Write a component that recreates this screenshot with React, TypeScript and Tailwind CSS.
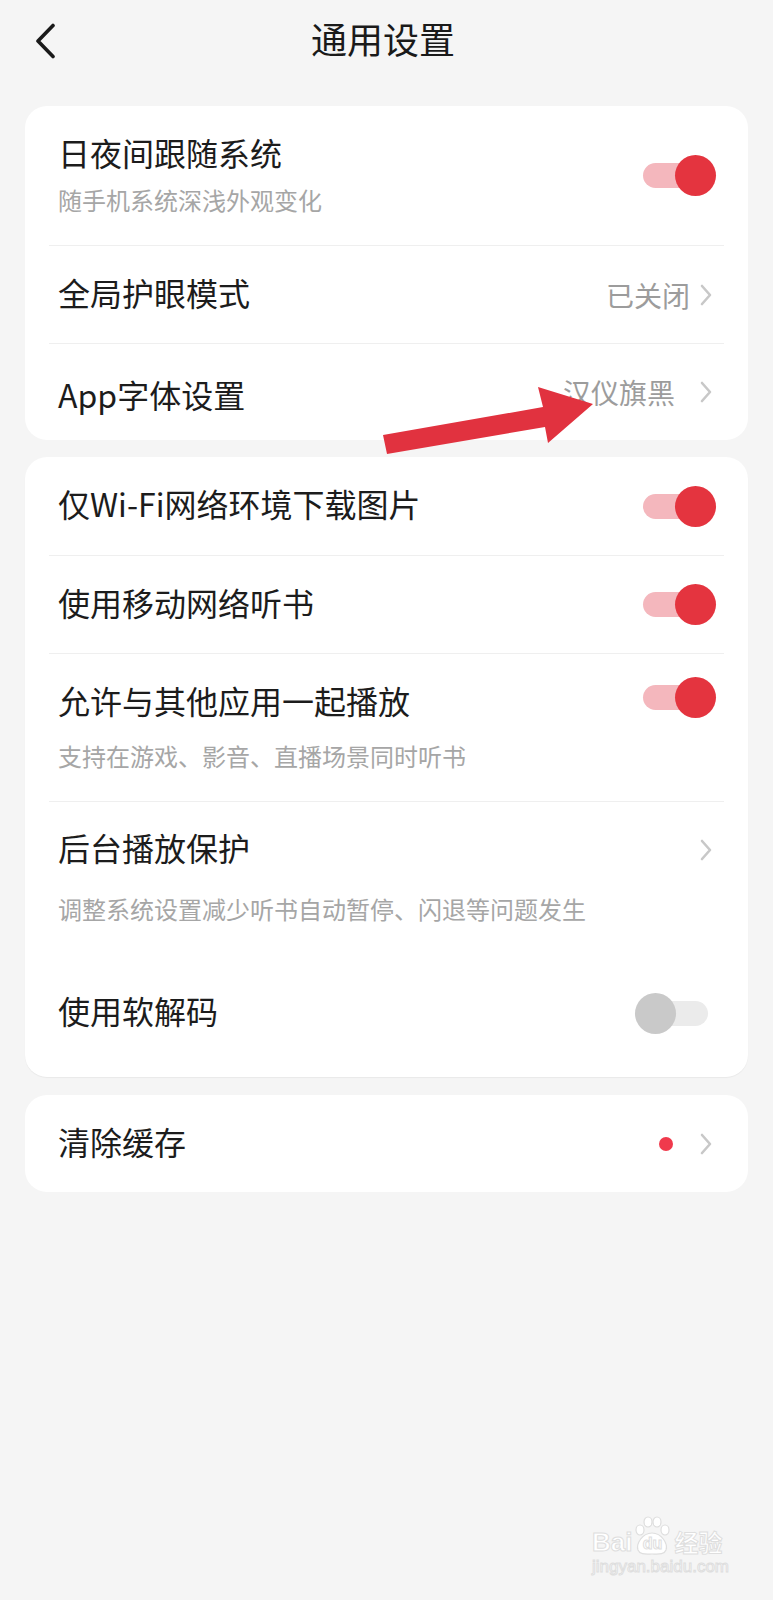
import React from "react";

// small gray chevron used on the right of navigable rows
const Chevron = () => (
  <svg width="12" height="22" viewBox="0 0 12 22" className="mr-[4px] shrink-0">
    <path d="M2 2 L10 11 L2 20" fill="none" stroke="#c8c8c8" strokeWidth="2.6" strokeLinecap="round" strokeLinejoin="round" />
  </svg>
);

const Toggle = ({ on }: { on: boolean }) => (
  <div className="relative h-[41px] w-[81px] shrink-0">
    <div className={`absolute left-[8px] top-[8px] h-[25px] w-[65px] rounded-full ${on ? "bg-[#f4b7bd]" : "bg-[#ebebeb]"}`} />
    <div className={`absolute top-0 h-[41px] w-[41px] rounded-full ${on ? "right-0 bg-[#e4343f]" : "left-0 bg-[#c9c9c9]"}`} />
  </div>
);

const Divider = () => <div className="mx-[24px] h-px bg-[#efefef]" />;

// text sits a bit high in its box, like the app font does
const Title = ({ children }: { children: React.ReactNode }) => (
  <div className="pb-[6px] text-[32px] leading-[34px] text-[#1c1c1c]">{children}</div>
);

const Sub = ({ children, className = "" }: { children: React.ReactNode; className?: string }) => (
  <div className={`text-[24px] leading-[32px] text-[#a6a6a6] ${className}`}>{children}</div>
);

const Card = ({ children, className = "" }: { children: React.ReactNode; className?: string }) => (
  <div className={`mx-[25px] overflow-hidden rounded-[22px] bg-white ${className}`}>{children}</div>
);

export default function App() {
  return (
    <div className="relative min-h-[1600px] w-full bg-[#f5f5f5] pb-10 font-['Noto_Sans_CJK_SC','Noto_Sans',sans-serif]">
      {/* header */}
      <div className="relative flex h-[84px] items-center justify-center pr-[7px]">
        <svg width="24" height="36" viewBox="0 0 24 36" className="absolute left-[33px] top-[23px]">
          <path d="M20 2.5 L5 18 L20 33.5" fill="none" stroke="#1a1a1a" strokeWidth="3.6" strokeLinecap="round" strokeLinejoin="round" />
        </svg>
        <div className="mb-[8px] text-[36px] leading-[44px] text-[#1a1a1a]">通用设置</div>
      </div>

      <Card className="mt-[22px]">
        <div className="flex h-[139px] items-center justify-between pl-[33px] pr-[32px]">
          <div className="flex flex-col">
            <Title>日夜间跟随系统</Title>
            <Sub className="mt-[9px]">随手机系统深浅外观变化</Sub>
          </div>
          <Toggle on />
        </div>
        <Divider />
        <div className="flex h-[97px] items-center justify-between pl-[33px] pr-[32px]">
          <Title>全局护眼模式</Title>
          <div className="flex items-center gap-[10px]">
            <span className="text-[28px] leading-[36px] text-[#9c9c9c]">已关闭</span>
            <Chevron />
          </div>
        </div>
        <Divider />
        <div className="flex h-[96px] items-center justify-between pl-[33px] pr-[32px]">
          <div className="mt-[10px]">
            <Title>App字体设置</Title>
          </div>
          <div className="flex items-center gap-[25px]">
            <span className="text-[28px] leading-[36px] text-[#9c9c9c]">汉仪旗黑</span>
            <Chevron />
          </div>
        </div>
      </Card>

      <Card className="mt-[17px] shadow-[0_1px_1px_rgba(0,0,0,0.05)]">
        <div className="flex h-[98px] items-center justify-between pl-[33px] pr-[32px]">
          <Title>仅Wi-Fi网络环境下载图片</Title>
          <Toggle on />
        </div>
        <Divider />
        <div className="flex h-[97px] items-center justify-between pl-[33px] pr-[32px]">
          <Title>使用移动网络听书</Title>
          <Toggle on />
        </div>
        <Divider />
        <div className="flex h-[147px] items-start justify-between pl-[33px] pr-[32px] pt-[23px]">
          <div className="mt-[6px] flex flex-col">
            <Title>允许与其他应用一起播放</Title>
            <Sub className="mt-[17px]">支持在游戏、影音、直播场景同时听书</Sub>
          </div>
          <Toggle on />
        </div>
        <Divider />
        <div className="flex h-[147px] flex-col pl-[33px] pr-[32px] pt-[28px]">
          <div className="flex items-center justify-between">
            <Title>后台播放保护</Title>
            <Chevron />
          </div>
          <Sub className="mt-[23px]">调整系统设置减少听书自动暂停、闪退等问题发生</Sub>
        </div>
        <div className="flex h-[128px] items-center justify-between pl-[33px] pr-[32px]">
          <Title>使用软解码</Title>
          <Toggle on={false} />
        </div>
      </Card>

      <Card className="mt-[18px]">
        <div className="flex h-[97px] items-center justify-between pl-[33px] pr-[32px]">
          <Title>清除缓存</Title>
          <div className="flex items-center gap-[27px]">
            <span className="h-[14px] w-[14px] rounded-full bg-[#f03a4c]" />
            <Chevron />
          </div>
        </div>
      </Card>

      {/* red annotation arrow */}
      <svg width="216" height="74" viewBox="0 0 216 74" className="pointer-events-none absolute left-[380px] top-[383px]">
        <polygon points="3,52 163,24 158,4 213,21 168,60 165,44 7,71" fill="#e1323f" />
      </svg>

      {/* baidu jingyan watermark */}
      <div className="pointer-events-none absolute left-[592px] top-[1516px] flex flex-col text-white [-webkit-text-stroke:1px_#dedede]">
        <div className="flex items-end">
          <span className="text-[26px] font-bold leading-[28px] font-['Liberation_Sans',sans-serif]">Bai</span>
          <span className="relative mx-[2px] flex h-[40px] w-[36px] items-end justify-center">
            <svg width="36" height="40" viewBox="0 0 36 40" className="absolute left-0 top-0">
              <g fill="white" stroke="#dedede" strokeWidth="1.2">
                <ellipse cx="6" cy="14" rx="4" ry="5" />
                <ellipse cx="14" cy="6" rx="4" ry="5" />
                <ellipse cx="23" cy="6" rx="4" ry="5" />
                <ellipse cx="31" cy="14" rx="4" ry="5" />
                <path d="M18 17 C28 17 34 28 32 34 C30 39 24 38 18 38 C12 38 6 39 4 34 C2 28 8 17 18 17 Z" />
              </g>
            </svg>
            <span className="relative mb-[3px] text-[16px] font-bold leading-[18px] font-['Liberation_Sans',sans-serif]">du</span>
          </span>
          <span className="ml-[2px] text-[24px] font-bold leading-[28px]">经验</span>
        </div>
        <span className="mt-[1px] text-[17px] leading-[20px] font-['Liberation_Sans',sans-serif]">jingyan.baidu.com</span>
      </div>
    </div>
  );
}
